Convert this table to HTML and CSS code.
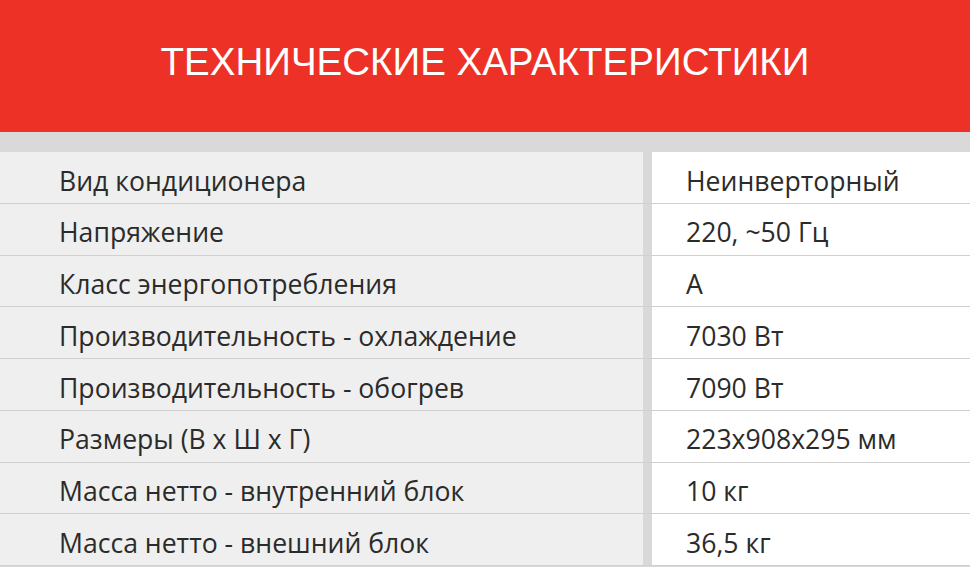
FILE: index.html
```html
<!DOCTYPE html>
<html lang="ru">
<head>
<meta charset="utf-8">
<link rel="stylesheet" href="styles.css">
</head>
<body>
<header class="banner"><h1 class="title">ТЕХНИЧЕСКИЕ ХАРАКТЕРИСТИКИ</h1></header>
<div class="spacer"></div>
<div class="specs">
  <div class="row"><div class="name">Вид кондиционера</div><div class="val">Неинверторный</div></div>
  <div class="row"><div class="name">Напряжение</div><div class="val">220, ~50 Гц</div></div>
  <div class="row"><div class="name">Класс энергопотребления</div><div class="val">A</div></div>
  <div class="row"><div class="name">Производительность - охлаждение</div><div class="val">7030 Вт</div></div>
  <div class="row"><div class="name">Производительность - обогрев</div><div class="val">7090 Вт</div></div>
  <div class="row"><div class="name">Размеры (В х Ш х Г)</div><div class="val">223x908x295 мм</div></div>
  <div class="row"><div class="name">Масса нетто - внутренний блок</div><div class="val">10 кг</div></div>
  <div class="row"><div class="name">Масса нетто - внешний блок</div><div class="val">36,5 кг</div></div>
</div>
</body>
</html>
```

FILE: styles.css
```css
html, body { margin: 0; padding: 0; }
body { width: 970px; height: 567px; overflow: hidden; background: #d9d9d9; font-family: "Open Sans", "Noto Sans", sans-serif; }
.banner { height: 132px; background: #ee3126; display: flex; align-items: center; justify-content: center; }
.title { margin: 0; padding-bottom: 8px; color: #fff; font-family: "Liberation Sans", Arial, sans-serif; font-weight: 400; font-size: 38.5px; letter-spacing: 0; }
.spacer { height: 20px; background: #d9d9d9; }
.specs { display: flex; flex-direction: column; }
.row { display: grid; grid-template-columns: 643px 1fr; column-gap: 9px; height: 51.75px; box-sizing: border-box; border-bottom: 1.5px solid #d0d0d0; }
.name, .val { display: flex; align-items: center; font-size: 26.6px; color: #2b2b2b; padding-top: 7px; line-height: 1; }
.name { background: #efefef; padding-left: 59px; }
.val { background: #fff; padding-left: 34px; }
```
